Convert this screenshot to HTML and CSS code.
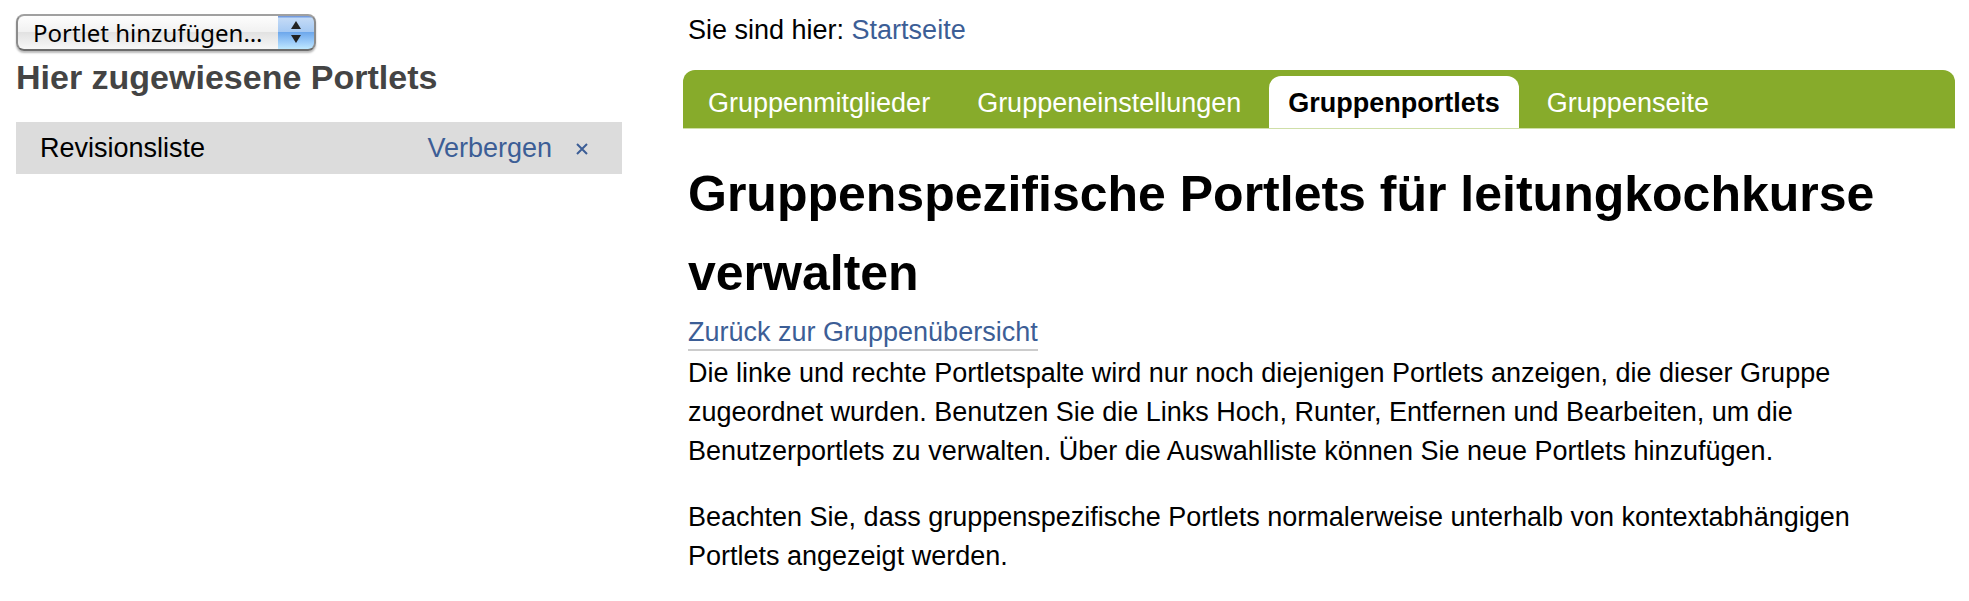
FILE: index.html
```html
<!DOCTYPE html>
<html lang="de">
<head>
<meta charset="utf-8">
<title>Gruppenspezifische Portlets verwalten</title>
<link rel="stylesheet" href="styles.css">
</head>
<body>
<div class="page">
  <aside class="sidebar">
    <div class="picker">
      <select class="picker-select" aria-label="Portlet hinzufügen">
        <option>Portlet hinzufügen…</option>
      </select>
      <svg class="picker-arrows" viewBox="0 0 10 24" aria-hidden="true"><path d="M5 1 10 9H0zM5 23 0 15h10z"/></svg>
    </div>
    <h2 class="sidebar-title">Hier zugewiesene Portlets</h2>
    <div class="portlet">
      <span class="portlet-name">Revisionsliste</span>
      <a class="link" href="#">Verbergen</a>
      <button class="remove" type="button" aria-label="Entfernen"><svg class="remove-icon" viewBox="0 0 12 12" aria-hidden="true"><path d="M1 1 11 11M11 1 1 11"/></svg></button>
    </div>
  </aside>
  <main class="main">
    <nav class="breadcrumb">Sie sind hier: <a class="link" href="#">Startseite</a></nav>
    <nav class="tabs">
      <a class="tab" href="#">Gruppenmitglieder</a>
      <a class="tab" href="#">Gruppeneinstellungen</a>
      <a class="tab tab-active" href="#" aria-current="page">Gruppenportlets</a>
      <a class="tab" href="#">Gruppenseite</a>
    </nav>
    <div class="content">
      <h1 class="title">Gruppenspezifische Portlets für leitungkochkurse verwalten</h1>
      <a class="link back" href="#">Zurück zur Gruppenübersicht</a>
      <p class="text">Die linke und rechte Portletspalte wird nur noch diejenigen Portlets anzeigen, die dieser Gruppe zugeordnet wurden. Benutzen Sie die Links Hoch, Runter, Entfernen und Bearbeiten, um die Benutzerportlets zu verwalten. Über die Auswahlliste können Sie neue Portlets hinzufügen.</p>
      <p class="text">Beachten Sie, dass gruppenspezifische Portlets normalerweise unterhalb von kontextabhängigen Portlets angezeigt werden.</p>
    </div>
  </main>
</div>
</body>
</html>
```
FILE: styles.css
```css
* {
  box-sizing: border-box;
}

body {
  margin: 0;
  background: #fff;
  color: #000;
  font: 27px/39px "Liberation Sans", Arial, sans-serif;
}

.page {
  display: grid;
  grid-template-columns: minmax(0, 606fr) minmax(0, 1272fr);
  gap: 61px;
  padding: 11px 14px 24px 16px;
}

.link {
  color: #3c5e96;
  text-decoration: none;
}

.sidebar {
  padding-top: 3px;
}

.picker {
  position: relative;
  width: 300px;
  height: 37px;
}

.picker-select {
  display: block;
  width: 100%;
  height: 100%;
  padding: 0 38px 0 15px;
  appearance: none;
  border: 2px solid #8c8c8c;
  border-top-color: #a0a0a0;
  border-bottom-color: #6c6c6c;
  border-radius: 8px;
  background:
    linear-gradient(#3a4bb0, #7fa9e6 8%, #c3daf6 12%, #a5c9f3 48%, #6ea8ec 50%, #a4d2fb 80%, #c8f0ff) right / 38px 100% no-repeat border-box,
    linear-gradient(#fff, #f1f1f1 48%, #e2e2e2 50%, #fafafa) border-box;
  box-shadow: 0 2px 2px #bbb;
  color: #000;
  font: 24px "Noto Sans", sans-serif;
}

.picker-arrows {
  position: absolute;
  top: 6px;
  right: 15px;
  width: 10px;
  height: 24px;
  fill: #222;
  pointer-events: none;
}

.sidebar-title {
  margin: 7px 0 25px;
  color: #444;
  font-size: 34px;
  line-height: 39px;
}

.portlet {
  display: flex;
  align-items: center;
  padding: 7px 34px 6px 24px;
  background: #dcdcdc;
}

.portlet-name {
  flex: 1;
}

.remove {
  display: flex;
  margin-left: 24px;
  padding: 0;
  border: 0;
  background: none;
}

.remove-icon {
  width: 12px;
  height: 12px;
  fill: none;
  stroke: #3c5e96;
  stroke-width: 2;
}

.breadcrumb {
  padding-left: 5px;
}

.tabs {
  display: flex;
  gap: 9px;
  margin-top: 20px;
  padding: 6px 6px 0;
  border-bottom: 1px solid #cfdfa8;
  border-radius: 12px 12px 0 0;
  background: #87ab2b;
}

.tab {
  padding: 8px 19px 5px;
  border-radius: 12px 12px 0 0;
  color: #fff;
  text-decoration: none;
}

.tab-active {
  background: #fff;
  color: #000;
  font-weight: bold;
}

.content {
  padding: 26px 60px 0 5px;
}

.title {
  margin: 0;
  font-size: 50px;
  line-height: 79px;
}

.back {
  display: inline-block;
  margin-bottom: 3px;
  border-bottom: 2px solid #ccc;
  line-height: 34px;
}

.text {
  margin: 0 0 27px;
}
```
